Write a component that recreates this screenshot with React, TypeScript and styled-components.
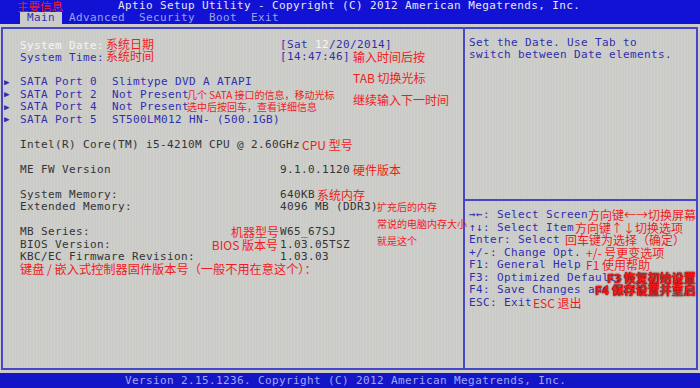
import React from 'react';
import styled, { createGlobalStyle } from 'styled-components';

const mono = `"DejaVu Sans Mono", "Liberation Mono", monospace`;
const cjk = `"Noto Sans CJK SC", "Noto Sans", sans-serif`;

const GlobalStyle = createGlobalStyle`
  html, body { margin: 0; padding: 0; background: #cbcbc8; }
  body { width: 700px; height: 388px; overflow: hidden; }
`;

const tones = {
  blue: '#2f2fae',
  dark: '#343434',
  white: '#f6f6f6',
};
type Tone = keyof typeof tones;

const Screen = styled.div`
  position: relative;
  width: 700px;
  height: 388px;
  display: flex;
  flex-direction: column;
  overflow: hidden;
  font-family: ${mono};
  font-size: 11px;
  letter-spacing: 0.38px;
`;

const TopBar = styled.header`
  position: relative;
  height: 24px;
  flex: none;
  display: flex;
  flex-direction: column;
  background: #1212d4;
`;

const Title = styled.div`
  height: 12px;
  line-height: 12px;
  padding-left: 118px;
  color: #e6e6f6;
  white-space: pre;
`;

const Tabs = styled.nav`
  display: flex;
  height: 12px;
  padding-left: 20px;
`;

const Tab = styled.span<{ $active?: boolean }>`
  padding: 0 7px;
  line-height: 12px;
  color: ${(p) => (p.$active ? '#3030b4' : '#95a3ee')};
  background: ${(p) => (p.$active ? '#cbcbc8' : 'transparent')};
`;

const Body = styled.main`
  flex: 1;
  display: flex;
  padding: 3px 4px 3px 1px;
  background: #cbcbc8;
  background-image: repeating-linear-gradient(90deg, rgba(255, 255, 255, 0.07) 0 1px, transparent 1px 3px);
`;

const Frame = styled.div`
  flex: 1;
  display: flex;
  border: 2px solid #4646c8;
`;

const LeftPanel = styled.section`
  position: relative;
  width: 460px;
  flex: none;
  padding-top: 9px;
`;

const RightPanel = styled.aside`
  flex: 1;
  display: flex;
  flex-direction: column;
  border-left: 2px solid #4646c8;
`;

const HelpBox = styled.div`
  height: 162px;
  flex: none;
  padding: 8px 0 0 4px;
  border-bottom: 2px solid #4646c8;
  color: ${tones.blue};
  line-height: 12.3px;
  white-space: pre;
`;

const KeyList = styled.div`
  padding: 7.5px 0 0 4px;
`;

const Row = styled.div`
  display: flex;
  align-items: center;
  height: 12.5px;
  white-space: pre;
`;

const Marker = styled.span`
  width: 17px;
  flex: none;
  padding-left: 1px;
  box-sizing: border-box;
  font-size: 9px;
  letter-spacing: 0;
  color: ${tones.blue};
`;

const Label = styled.span<{ $w?: number; $tone?: Tone }>`
  display: flex;
  justify-content: space-between;
  align-items: center;
  flex: none;
  width: ${(p) => (p.$w ? `${p.$w}px` : 'auto')};
  color: ${(p) => tones[p.$tone ?? 'dark']};
`;

const Value = styled.span<{ $tone?: Tone }>`
  color: ${(p) => tones[p.$tone ?? 'dark']};
`;

const Hi = styled.span`
  color: ${tones.white};
`;

const KeyText = styled.span<{ $w?: number }>`
  flex: none;
  width: ${(p) => (p.$w ? `${p.$w}px` : 'auto')};
  color: ${tones.blue};
`;

const Note = styled.span<{ $size?: number; $gap?: number; $end?: number; $bold?: boolean }>`
  flex: none;
  margin-left: ${(p) => p.$gap ?? 0}px;
  margin-right: ${(p) => p.$end ?? 0}px;
  font-family: ${cjk};
  font-size: ${(p) => p.$size ?? 12}px;
  font-weight: ${(p) => (p.$bold ? 700 : 400)};
  letter-spacing: 0;
  line-height: 1.1;
  white-space: nowrap;
  color: #f01c1c;
  text-shadow: ${(p) => (p.$bold ? '0 0 1px #400, 0 0 2px #600' : 'none')};
`;

const FloatNote = styled(Note)<{ $x: number; $y: number }>`
  position: absolute;
  left: ${(p) => p.$x}px;
  top: ${(p) => p.$y}px;
`;

const Blank = styled.div`
  height: 12.5px;
`;

const BottomBar = styled.footer`
  height: 15px;
  flex: none;
  padding-left: 125px;
  line-height: 15px;
  background: #1515c8;
  color: #a0a9ee;
  white-space: pre;
`;

const sataPorts = [
  { port: 'SATA Port 0', device: 'Slimtype DVD A ATAPI' },
  { port: 'SATA Port 2', device: 'Not Present', note: '几个 SATA 接口的信息，移动光标' },
  { port: 'SATA Port 4', device: 'Not Present', note: '选中后按回车，查看详细信息' },
  { port: 'SATA Port 5', device: 'ST500LM012 HN- (500.1GB)' },
];

const keys = [
  { text: '→←: Select Screen', note: '方向键←→切换屏幕' },
  { text: '↑↓: Select Item', note: '方向键↑↓切换选项', gap: 1 },
  { text: 'Enter: Select', note: '回车键为选择（确定）', gap: 5 },
  { text: '+/-: Change Opt.', note: '+/- 号更变选项', gap: 5 },
  { text: 'F1: General Help', note: 'F1 使用帮助', gap: 5 },
  { text: 'F3: Optimized Defaults', note: 'F3 恢复初始设置', w: 138, bold: true },
  { text: 'F4: Save Changes and Exit', note: 'F4 保存设置并重启', w: 126, bold: true },
  { text: 'ESC: Exit', note: 'ESC 退出', gap: 1 },
];

export default function App() {
  return (
    <>
      <GlobalStyle />
      <Screen>
        <TopBar>
          <FloatNote $x={17} $y={0} $size={11.5}>主要信息</FloatNote>
          <Title>Aptio Setup Utility - Copyright (C) 2012 American Megatrends, Inc.</Title>
          <Tabs>
            <Tab $active>Main</Tab>
            <Tab>Advanced</Tab>
            <Tab>Security</Tab>
            <Tab>Boot</Tab>
            <Tab>Exit</Tab>
          </Tabs>
        </TopBar>

        <Body>
          <Frame>
            <LeftPanel>
              <Row>
                <Marker />
                <Label $w={260} $tone="white">
                  <span>
                    System Date:<Note $gap={2}>系统日期</Note>
                  </span>
                </Label>
                <Value $tone="blue">
                  [Sat <Hi>12</Hi>/20/2014]
                </Value>
              </Row>
              <Row>
                <Marker />
                <Label $w={260} $tone="blue">
                  <span>
                    System Time:<Note $gap={2}>系统时间</Note>
                  </span>
                </Label>
                <Value $tone="blue">[14:47:46]</Value>
                <Note $gap={3}>输入时间后按</Note>
              </Row>
              <Blank />
              {sataPorts.map((s) => (
                <Row key={s.port}>
                  <Marker>▶</Marker>
                  <Label $w={92} $tone="blue">{s.port}</Label>
                  <Value $tone="blue">{s.device}</Value>
                  {s.note && <Note $size={10} $gap={-2}>{s.note}</Note>}
                </Row>
              ))}
              <Blank />
              <Row>
                <Marker />
                <Label>Intel(R) Core(TM) i5-4210M CPU @ 2.60GHz</Label>
                <Note $gap={2}>CPU 型号</Note>
              </Row>
              <Blank />
              <Row>
                <Marker />
                <Label $w={260}>ME FW Version</Label>
                <Value>9.1.0.1120</Value>
                <Note $gap={3}>硬件版本</Note>
              </Row>
              <Blank />
              <Row>
                <Marker />
                <Label $w={260}>System Memory:</Label>
                <Value>640KB</Value>
                <Note $gap={2}>系统内存</Note>
              </Row>
              <Row>
                <Marker />
                <Label $w={260}>Extended Memory:</Label>
                <Value>4096 MB (DDR3)</Value>
                <Note $size={10} $gap={-1}>扩充后的内存</Note>
              </Row>
              <Blank />
              <Row>
                <Marker />
                <Label $w={260}>
                  MB Series:<Note $end={1}>机器型号</Note>
                </Label>
                <Value>W65_67SJ</Value>
              </Row>
              <Row>
                <Marker />
                <Label $w={260}>
                  BIOS Version:<Note $end={2}>BIOS 版本号</Note>
                </Label>
                <Value>1.03.05TSZ</Value>
              </Row>
              <Row>
                <Marker />
                <Label $w={260}>KBC/EC Firmware Revision:</Label>
                <Value>1.03.03</Value>
              </Row>
              <Row>
                <Marker />
                <Note $size={12.2}>键盘 / 嵌入式控制器固件版本号（一般不用在意这个）：</Note>
              </Row>

              <FloatNote $x={350} $y={42}>TAB 切换光标</FloatNote>
              <FloatNote $x={350} $y={64}>继续输入下一时间</FloatNote>
              <FloatNote $x={374} $y={189} $size={10}>常说的电脑内存大小</FloatNote>
              <FloatNote $x={374} $y={206} $size={10}>就是这个</FloatNote>
            </LeftPanel>

            <RightPanel>
              <HelpBox>{'Set the Date. Use Tab to\nswitch between Date elements.'}</HelpBox>
              <KeyList>
                {keys.map((k) => (
                  <Row key={k.text}>
                    <KeyText $w={k.w}>{k.text}</KeyText>
                    <Note $gap={k.gap ?? 0} $bold={k.bold}>{k.note}</Note>
                  </Row>
                ))}
              </KeyList>
            </RightPanel>
          </Frame>
        </Body>

        <BottomBar>Version 2.15.1236. Copyright (C) 2012 American Megatrends, Inc.</BottomBar>
      </Screen>
    </>
  );
}
